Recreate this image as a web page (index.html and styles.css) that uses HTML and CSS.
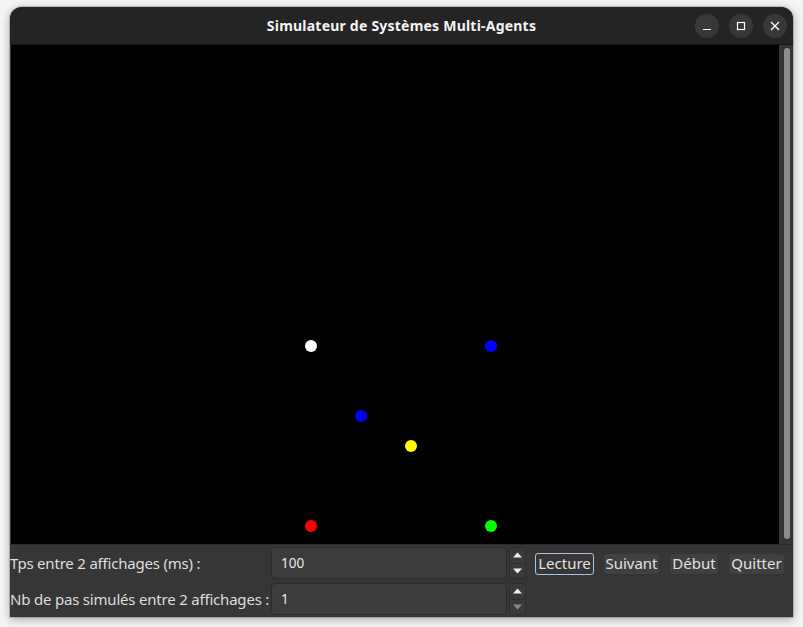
FILE: index.html
```html
<!DOCTYPE html>
<html lang="fr">
<head>
<meta charset="utf-8">
<title>Simulateur de Systèmes Multi-Agents</title>
<link rel="stylesheet" href="styles.css">
</head>
<body>
<div class="window">
  <header class="titlebar">
    <div class="title">Simulateur de Systèmes Multi-Agents</div>
    <div class="controls">
      <span class="ctl"><svg width="10" height="10" viewBox="0 0 10 10"><path d="M1 8.5H9" stroke="#fff" stroke-width="1.2"/></svg></span>
      <span class="ctl"><svg width="10" height="10" viewBox="0 0 10 10"><rect x="1.5" y="1.5" width="7" height="7" fill="none" stroke="#fff" stroke-width="1.2"/></svg></span>
      <span class="ctl"><svg width="10" height="10" viewBox="0 0 10 10"><path d="M1 1L9 9M9 1L1 9" stroke="#fff" stroke-width="1.3"/></svg></span>
    </div>
  </header>
  <div class="content">
    <div class="canvas">
      <span class="dot white" style="left:294px;top:295px"></span>
      <span class="dot blue" style="left:474px;top:295px"></span>
      <span class="dot blue" style="left:344px;top:365px"></span>
      <span class="dot yellow" style="left:394px;top:395px"></span>
      <span class="dot red" style="left:294px;top:475px"></span>
      <span class="dot green" style="left:474px;top:475px"></span>
    </div>
    <div class="scrollbar"><div class="thumb"></div></div>
  </div>
  <div class="panel">
    <div class="fields">
      <div class="row">
        <label class="label">Tps entre 2 affichages (ms) :</label>
        <div class="field">100</div>
        <div class="spin">
          <span class="sbtn"><svg width="9" height="6" viewBox="0 0 9 6"><path d="M0 5.5L4.5 0.5L9 5.5Z" fill="#f2f2f2"/></svg></span>
          <span class="sbtn"><svg width="9" height="6" viewBox="0 0 9 6"><path d="M0 0.5L4.5 5.5L9 0.5Z" fill="#f2f2f2"/></svg></span>
        </div>
      </div>
      <div class="row">
        <label class="label">Nb de pas simulés entre 2 affichages :</label>
        <div class="field">1</div>
        <div class="spin">
          <span class="sbtn"><svg width="9" height="6" viewBox="0 0 9 6"><path d="M0 5.5L4.5 0.5L9 5.5Z" fill="#f2f2f2"/></svg></span>
          <span class="sbtn"><svg width="9" height="6" viewBox="0 0 9 6"><path d="M0 0.5L4.5 5.5L9 0.5Z" fill="#8a8a8a"/></svg></span>
        </div>
      </div>
    </div>
    <div class="buttons">
      <button class="btn focus btn-lecture">Lecture</button>
      <button class="btn btn-suivant">Suivant</button>
      <button class="btn btn-debut">Début</button>
      <button class="btn btn-quitter">Quitter</button>
    </div>
  </div>
</div>
</body>
</html>
```
FILE: styles.css
```css
html, body {
  margin: 0;
  padding: 0;
}
body {
  background: #f4f4f4;
  padding: 7px 10px 0 10px;
  font-family: "Noto Sans", "DejaVu Sans", sans-serif;
  height: 627px;
  box-sizing: border-box;
  overflow: hidden;
}
.window {
  width: 783px;
  height: 610px;
  background: #363636;
  border-radius: 12px 12px 0 0;
  box-shadow: 0 2px 10px rgba(0,0,0,0.35), 0 0 0 1px rgba(0,0,0,0.15);
  display: flex;
  flex-direction: column;
  overflow: hidden;
}
.titlebar {
  height: 37px;
  flex: none;
  background: #242424;
  border-bottom: 1px solid #161616;
  display: flex;
  align-items: center;
  justify-content: center;
  position: relative;
}
.title {
  color: #f4f4f4;
  font-weight: bold;
  font-size: 14px;
  letter-spacing: 0.22px;
}
.controls {
  position: absolute;
  right: 6px;
  top: 7px;
  display: flex;
  gap: 10px;
}
.ctl {
  width: 24px;
  height: 24px;
  border-radius: 50%;
  background: #383838;
  display: flex;
  align-items: center;
  justify-content: center;
}
.content {
  height: 499px;
  flex: none;
  display: flex;
  padding-left: 1px;
}
.canvas {
  width: 768px;
  height: 499px;
  background: #000;
  position: relative;
  flex: none;
}
.dot {
  position: absolute;
  width: 12px;
  height: 12px;
  border-radius: 50%;
}
.dot.white { background: #fff; }
.dot.blue { background: #0000ff; }
.dot.yellow { background: #ffff00; }
.dot.red { background: #ff0000; }
.dot.green { background: #00ff00; }
.scrollbar {
  flex: 1;
  background: #343434;
  padding: 3px 3px 5px 5px;
  display: flex;
}
.thumb {
  flex: 1;
  background: #8c8c8c;
  border-radius: 3px;
}
.panel {
  flex: 1;
  display: flex;
  align-items: flex-start;
  background: #363636;
  border-top: 1px solid #2a2a2a;
}
.fields {
  display: flex;
  flex-direction: column;
  gap: 4px;
  padding-top: 2px;
}
.row {
  display: flex;
  align-items: center;
  height: 32px;
}
.label {
  width: 261px;
  flex: none;
  color: #dedede;
  font-size: 15px;
  letter-spacing: -0.2px;
  white-space: nowrap;
}
.field {
  width: 225px;
  height: 30px;
  flex: none;
  background: #3c3c3c;
  border: 1px solid #2b2b2b;
  border-radius: 4px;
  color: #e8e8e8;
  font-size: 13.5px;
  line-height: 30px;
  padding-left: 9px;
  margin-right: 2px;
}
.spin {
  width: 17px;
  height: 32px;
  flex: none;
  display: flex;
  flex-direction: column;
  border: 1px solid #2e2e2e;
  border-radius: 3px;
  box-sizing: border-box;
  background: #393939;
}
.sbtn {
  flex: 1;
  display: flex;
  align-items: center;
  justify-content: center;
}
.sbtn + .sbtn {
  border-top: 1px solid #2e2e2e;
}
.buttons {
  display: flex;
  gap: 9px;
  padding-top: 8px;
  padding-left: 9px;
}
.btn {
  height: 22px;
  padding: 0 0 2px;
  background: #404040;
  border: 1px solid #333;
  border-radius: 3px;
  color: #e2e2e2;
  font-family: "Noto Sans", "DejaVu Sans", sans-serif;
  font-size: 15px;
  line-height: 18px;
  text-align: center;
  box-sizing: border-box;
}
.btn-lecture { width: 59px; }
.btn-suivant { width: 57px; }
.btn-debut { width: 50px; }
.btn-quitter { width: 57px; }
.btn.focus {
  background: #363636;
  border-color: #a9c4de;
}
```
